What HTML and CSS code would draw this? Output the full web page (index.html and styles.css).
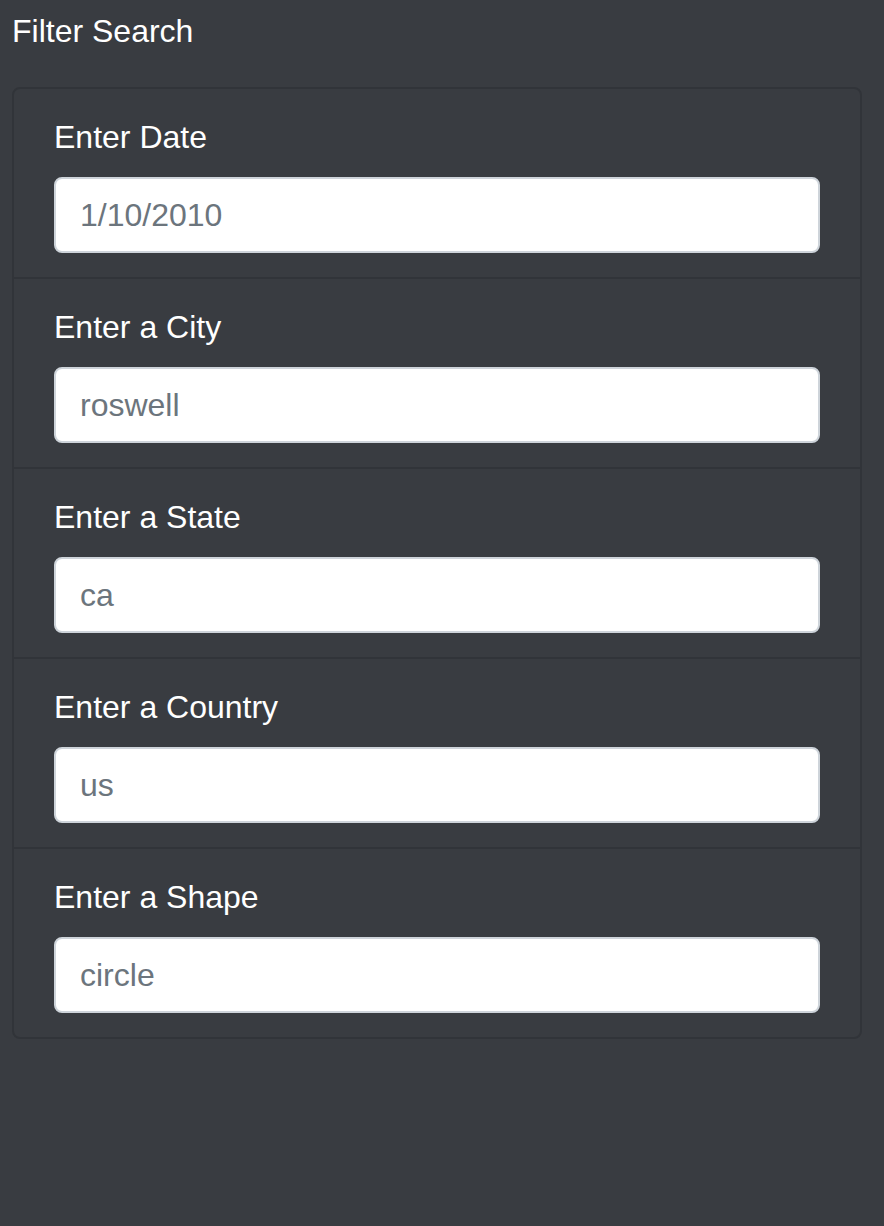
FILE: index.html
```html
<!DOCTYPE html>
<html lang="en">
<head>
<meta charset="utf-8">
<title>Filter Search</title>
<link rel="stylesheet" href="styles.css">
</head>
<body>
<main class="page">
  <h1 class="title">Filter Search</h1>
  <ul class="filters">
    <li class="filter-item">
      <label class="filter-label" for="date">Enter Date</label>
      <input class="filter-input" id="date" type="text" placeholder="1/10/2010">
    </li>
    <li class="filter-item">
      <label class="filter-label" for="city">Enter a City</label>
      <input class="filter-input" id="city" type="text" placeholder="roswell">
    </li>
    <li class="filter-item">
      <label class="filter-label" for="state">Enter a State</label>
      <input class="filter-input" id="state" type="text" placeholder="ca">
    </li>
    <li class="filter-item">
      <label class="filter-label" for="country">Enter a Country</label>
      <input class="filter-input" id="country" type="text" placeholder="us">
    </li>
    <li class="filter-item">
      <label class="filter-label" for="shape">Enter a Shape</label>
      <input class="filter-input" id="shape" type="text" placeholder="circle">
    </li>
  </ul>
</main>
</body>
</html>
```

FILE: styles.css
```css
* { box-sizing: border-box; }

html, body {
  margin: 0;
  background: #393c41;
}

body {
  font-family: "Liberation Sans", Arial, sans-serif;
  font-size: 32px;
  line-height: 48px;
  color: #ffffff;
  min-height: 1226px;
}

.page {
  padding: 12px 22px 12px 12px;
}

.title {
  margin: 0 0 37px 0;
  font-size: 32px;
  font-weight: 400;
  line-height: 38px;
}

.filters {
  list-style: none;
  margin: 0;
  padding: 0;
  border: 2px solid #313439;
  border-radius: 8px;
}

.filter-item {
  display: flex;
  flex-direction: column;
  padding: 24px 40px;
  border-top: 2px solid #313439;
}

.filter-item:first-child {
  border-top: 0;
  padding-top: 24px;
}

.filter-label {
  display: block;
  height: 48px;
  margin-bottom: 16px;
}

.filter-input {
  display: block;
  width: 100%;
  height: 76px;
  padding: 0 24px;
  border: 2px solid #ced4da;
  border-radius: 8px;
  background: #ffffff;
  font-family: "Liberation Sans", Arial, sans-serif;
  font-size: 32px;
  color: #6c757d;
  outline: none;
}

.filter-input::placeholder {
  color: #6c757d;
  opacity: 1;
}
```
